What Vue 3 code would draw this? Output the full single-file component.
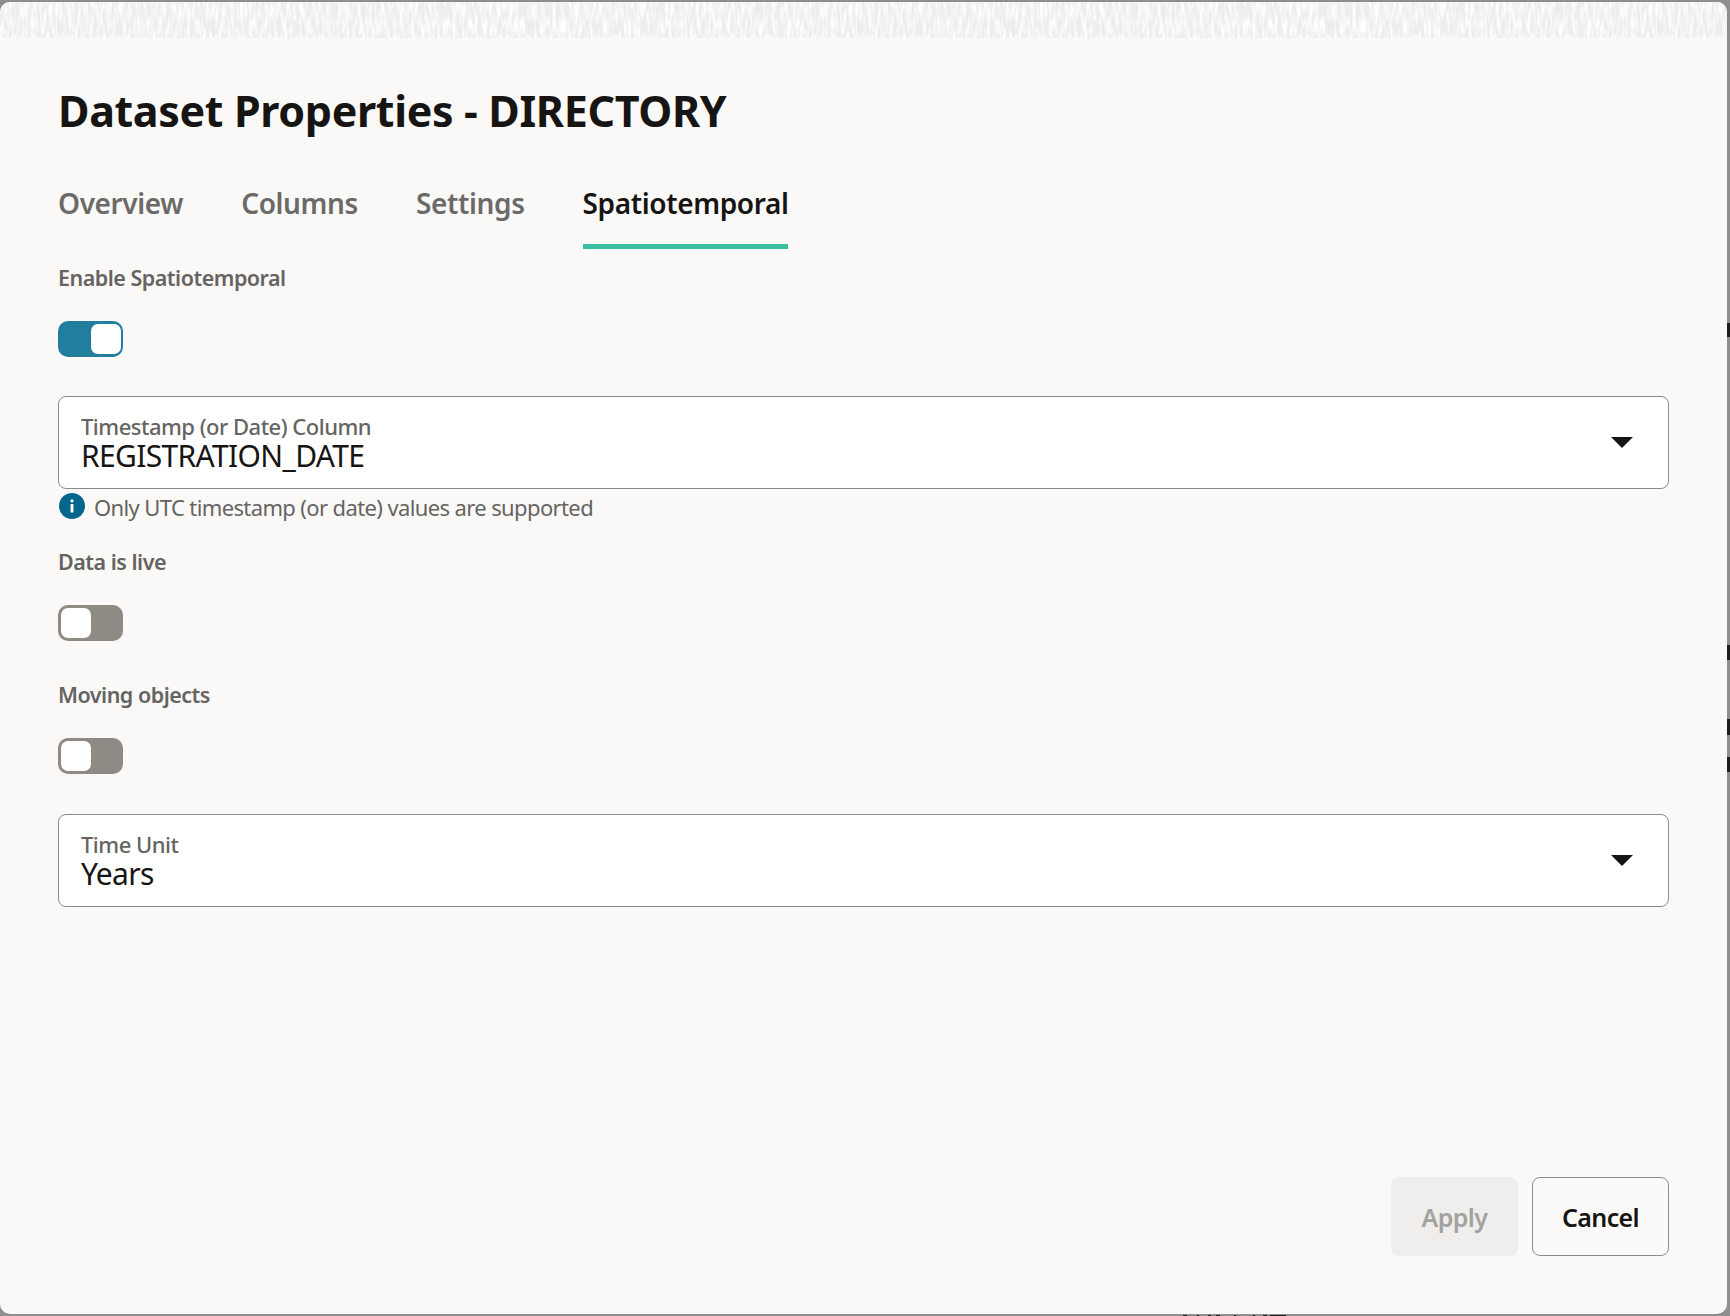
<script setup>
const tabs = [
  { name: 'Overview', active: false },
  { name: 'Columns', active: false },
  { name: 'Settings', active: false },
  { name: 'Spatiotemporal', active: true },
]
const sideMarks = [
  { top: 323, height: 14 },
  { top: 645, height: 15 },
  { top: 719, height: 16 },
  { top: 757, height: 15 },
]
const bottomMarks = [
  { left: 1183, width: 4 },
  { left: 1197, width: 2 },
  { left: 1208, width: 3 },
  { left: 1216, width: 4 },
  { left: 1234, width: 2 },
  { left: 1253, width: 2 },
  { left: 1263, width: 4 },
  { left: 1270, width: 16 },
]
</script>

<template>
  <div class="page">
    <span v-for="m in sideMarks" :key="m.top" class="side-mark" :style="{ top: m.top + 'px', height: m.height + 'px' }"></span>
    <span v-for="m in bottomMarks" :key="m.left" class="bottom-mark" :style="{ left: m.left + 'px', width: m.width + 'px' }"></span>
    <div class="dialog">
      <svg class="band" width="1727" height="36" xmlns="http://www.w3.org/2000/svg">
        <filter id="streaks" x="0" y="0" width="100%" height="100%">
          <feTurbulence type="fractalNoise" baseFrequency="0.32 0.06" numOctaves="2" seed="7" />
          <feColorMatrix type="matrix" values="0 0 0 0 1  0 0 0 0 1  0 0 0 0 1  2.6 0 0 0 -0.95" />
        </filter>
        <rect width="1727" height="36" fill="#eeedeb" />
        <rect width="1727" height="36" filter="url(#streaks)" />
      </svg>
      <div class="content">
        <h1 class="title">Dataset Properties - DIRECTORY</h1>
        <div class="tabs">
          <div v-for="t in tabs" :key="t.name" class="tab" :class="{ active: t.active }">{{ t.name }}</div>
        </div>

        <div class="label first">Enable Spatiotemporal</div>
        <div class="toggle on"><span class="knob"></span></div>

        <div class="field f1">
          <div class="field-text">
            <div class="field-label">Timestamp (or Date) Column</div>
            <div class="field-value">REGISTRATION_DATE</div>
          </div>
          <span class="caret"></span>
        </div>
        <div class="helper">
          <svg class="info" width="26" height="26" viewBox="0 0 26 26">
            <circle cx="13" cy="13" r="13" fill="#04668c" />
            <rect x="11.6" y="11" width="2.8" height="8.5" fill="#fff" />
            <rect x="11.6" y="6.5" width="2.8" height="2.8" fill="#fff" />
          </svg>
          <span class="helper-text">Only UTC timestamp (or date) values are supported</span>
        </div>

        <div class="label live">Data is live</div>
        <div class="toggle"><span class="knob"></span></div>

        <div class="label moving">Moving objects</div>
        <div class="toggle"><span class="knob"></span></div>

        <div class="field f2">
          <div class="field-text">
            <div class="field-label">Time Unit</div>
            <div class="field-value">Years</div>
          </div>
          <span class="caret"></span>
        </div>

        <div class="footer">
          <button class="btn apply">Apply</button>
          <button class="btn cancel">Cancel</button>
        </div>
      </div>
    </div>
  </div>
</template>

<style>
html, body { margin: 0; background: #8e8e8c; }
</style>

<style scoped>
.page {
  position: relative;
  width: 1730px;
  height: 1316px;
  padding-top: 2px;
  box-sizing: border-box;
  overflow: hidden;
  font-family: "Noto Sans", "Open Sans", sans-serif;
  background: #8e8e8c;
}
.side-mark {
  position: absolute;
  left: 1727px;
  width: 3px;
  background: #1e1d1b;
}
.bottom-mark {
  position: absolute;
  top: 1315px;
  height: 1px;
  background: #1e1d1b;
}
.dialog {
  position: relative;
  width: 1727px;
  height: 1312px;
  background: #fbf9f8;
  border-radius: 10px;
  overflow: hidden;
  display: flex;
  flex-direction: column;
}
.band {
  display: block;
  flex: none;
}
.content {
  flex: 1;
  display: flex;
  flex-direction: column;
  align-items: flex-start;
  padding: 0 58px 58px 58px;
  min-height: 0;
}
.title {
  margin: 45px 0 0;
  height: 56px;
  line-height: 56px;
  font-size: 43px;
  letter-spacing: -0.35px;
  font-weight: 700;
  color: #161513;
  white-space: nowrap;
}
.tabs {
  display: flex;
  gap: 58px;
  margin-top: 42px;
}
.tab {
  height: 68px;
  box-sizing: border-box;
  padding-top: 2px;
  line-height: 40px;
  font-size: 28px;
  letter-spacing: -0.38px;
  font-weight: 600;
  color: #6b6a68;
  white-space: nowrap;
}
.tab.active {
  color: #161513;
  border-bottom: 5px solid #3cc2a3;
}
.label {
  height: 30px;
  line-height: 28px;
  font-size: 21.5px;
  letter-spacing: -0.5px;
  font-weight: 600;
  color: #656462;
  white-space: nowrap;
}
.label.first { margin-top: 15px; }
.label.live { margin-top: 29px; }
.label.moving { margin-top: 40px; }
.toggle {
  margin-top: 27px;
  width: 65px;
  height: 36px;
  box-sizing: border-box;
  padding: 3px;
  border-radius: 10px;
  background: #8f8a84;
  display: flex;
  justify-content: flex-start;
}
.toggle.on {
  background: #227e9e;
  justify-content: flex-end;
  padding-right: 2px;
}
.knob {
  display: block;
  width: 30px;
  height: 30px;
  border-radius: 7px;
  background: #fff;
}
.field {
  width: 1611px;
  height: 93px;
  box-sizing: border-box;
  border: 1px solid #8c8b89;
  border-radius: 8px;
  background: #fff;
  padding: 2px 30px 0 22px;
  display: flex;
  align-items: center;
  justify-content: space-between;
}
.f1 { margin-top: 39px; }
.f2 { margin-top: 40px; }
.field-label {
  font-size: 22px;
  line-height: 24px;
  letter-spacing: -0.5px;
  color: #656462;
  font-weight: 500;
  white-space: nowrap;
}
.field-value {
  font-size: 30px;
  line-height: 36px;
  letter-spacing: -0.65px;
  color: #161513;
  white-space: nowrap;
}
.caret {
  width: 0;
  height: 0;
  margin-right: 5px;
  margin-top: -2px;
  border-left: 11px solid transparent;
  border-right: 11px solid transparent;
  border-top: 11px solid #161513;
}
.helper {
  display: flex;
  align-items: center;
  gap: 9px;
  margin-top: 4px;
  height: 26px;
  padding-left: 1px;
  font-size: 22px;
  letter-spacing: -0.62px;
  color: #656462;
  white-space: nowrap;
}
.helper-text { padding-top: 2px; }
.info { flex: none; }
.footer {
  margin-top: auto;
  align-self: flex-end;
  display: flex;
  gap: 14px;
}
.btn {
  height: 79px;
  box-sizing: border-box;
  border-radius: 8px;
  font-family: inherit;
  font-size: 25px;
  letter-spacing: -0.6px;
  font-weight: 600;
  padding: 0;
}
.apply {
  width: 127px;
  border: none;
  background: #efeeec;
  color: #a3a2a0;
}
.cancel {
  width: 137px;
  border: 1px solid #8c8b89;
  background: #fbf9f8;
  color: #161513;
}
</style>
